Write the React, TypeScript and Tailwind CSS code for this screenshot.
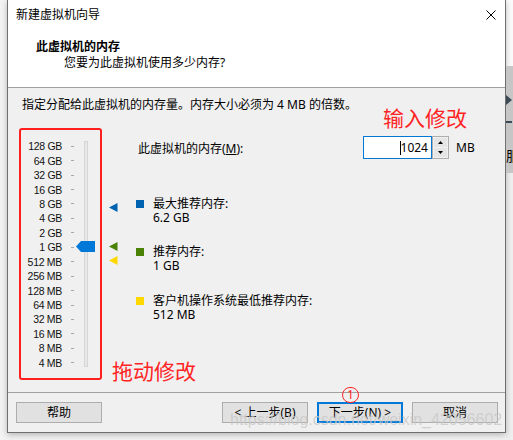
import React from 'react';

const sizes = [
  '128 GB', '64 GB', '32 GB', '16 GB', '8 GB', '4 GB', '2 GB', '1 GB',
  '512 MB', '256 MB', '128 MB', '64 MB', '32 MB', '16 MB', '8 MB', '4 MB',
];

const legend = [
  { color: 'bg-[#0063b1]', title: '最大推荐内存:', value: '6.2 GB', gap: 'mt-[38px]' },
  { color: 'bg-[#498205]', title: '推荐内存:', value: '1 GB', gap: 'mt-[20px]' },
  { color: 'bg-[#ffd800]', title: '客户机操作系统最低推荐内存:', value: '512 MB', gap: 'mt-[21px]' },
];

function Marker({ color, top }: { color: string; top: string }) {
  return (
    <svg className={`absolute left-[7px] ${top}`} width="9" height="9" viewBox="0 0 9 9">
      <polygon points="0,4.5 8.5,0 8.5,9" fill={color} />
    </svg>
  );
}

function Button({ label, primary }: { label: string; primary?: boolean }) {
  return (
    <div
      className={
        'w-[86px] h-[21px] flex items-center justify-center bg-[#e1e1e1] text-[12px] text-black ' +
        (primary ? 'border-2 border-[#0078d7]' : 'border border-[#adadad]')
      }
    >
      {label}
    </div>
  );
}

function MemorySlider() {
  return (
    <div className="ml-[11px] w-[83px] h-[252px] border-2 border-[#ff1f1f] rounded-[3px] flex">
      <div className="pt-[9px]">
        {sizes.map((s) => (
          <div key={s} className="h-[14.45px] flex items-center">
            <span className="w-[41px] text-right whitespace-nowrap text-[10.5px] leading-[14px] tracking-[-0.3px] font-['Liberation_Sans',sans-serif] text-[#111]">
              {s}
            </span>
            <span className="ml-[9px] w-[3px] h-px bg-[#a8a8a8]" />
          </div>
        ))}
      </div>
      <div className="relative ml-[10px] mt-[11px] w-[4px] h-[226px] bg-[#e7e7e7] border border-[#d6d6d6]">
        <svg className="absolute left-[-9px] top-[99px]" width="19" height="11" viewBox="0 0 19 11">
          <polygon points="0,5.5 5,0 19,0 19,11 5,11" fill="#0078d7" />
        </svg>
      </div>
    </div>
  );
}

export default function App() {
  return (
    <div className="w-[513px] h-[440px] bg-[#f3f3f3] flex font-['Segoe_UI','Noto_Sans','Noto_Sans_CJK_SC',sans-serif] text-black overflow-hidden">
      <div className="ml-[7px] w-[499px] h-[433px] flex flex-col relative border-l border-r border-b border-[#6f6f6f] shadow-[0_2px_6px_rgba(0,0,0,0.25)]">
        {/* title bar */}
        <div className="h-[30px] bg-white flex items-center justify-between pl-[8px] pr-[9px]">
          <span className="text-[12px]">新建虚拟机向导</span>
          <svg width="10" height="10" viewBox="0 0 10 10">
            <path d="M0.5 0.5 L9.5 9.5 M9.5 0.5 L0.5 9.5" stroke="#000" strokeWidth="1" />
          </svg>
        </div>

        {/* header */}
        <div className="h-[57px] bg-white pt-[9px]">
          <div className="pl-[28px] text-[12px] leading-[16px] font-bold">此虚拟机的内存</div>
          <div className="pl-[56px] text-[12px] leading-[16px]">您要为此虚拟机使用多少内存?</div>
        </div>
        <div className="h-px bg-[#a0a0a0]" />

        {/* body */}
        <div className="h-[304px] bg-[#f0f0f0] pt-[9px]">
          <div className="pl-[14px] text-[12px] leading-[16px]">
            指定分配给此虚拟机的内存量。内存大小必须为 4 MB 的倍数。
          </div>
          <div className="mt-[15px] flex items-start">
            <MemorySlider />
            <div className="relative w-[34px] h-[252px]">
              <Marker color="#0063b1" top="top-[75px]" />
              <Marker color="#498205" top="top-[114px]" />
              <Marker color="#ffd800" top="top-[128px]" />
            </div>
            <div className="pt-[8px] text-[12px]">
              <div className="flex items-center">
                <span className="w-[227px] pl-[2px] pt-[2px] leading-[14px]">
                  此虚拟机的内存(<span className="underline">M</span>):
                </span>
                <div className="w-[69px] h-[23px] bg-white border border-[#0078d7] flex items-center justify-end pr-[3px]">
                  <span className="w-px h-[14px] bg-black" />
                  <span className="leading-[14px]">1024</span>
                </div>
                <div className="w-[17px] h-[23px] border border-[#adadad] bg-[#f0f0f0] flex flex-col p-px gap-px">
                  <div className="flex-1 bg-[#e5e5e5] flex items-center justify-center">
                    <svg width="5" height="3" viewBox="0 0 5 3"><polygon points="2.5,0 5,3 0,3" fill="#000" /></svg>
                  </div>
                  <div className="flex-1 bg-[#e5e5e5] flex items-center justify-center">
                    <svg width="5" height="3" viewBox="0 0 5 3"><polygon points="0,0 5,0 2.5,3" fill="#000" /></svg>
                  </div>
                </div>
                <span className="ml-[7px] leading-[14px]">MB</span>
              </div>
              {legend.map((l) => (
                <div key={l.title} className={`flex ${l.gap}`}>
                  <span className={`w-[8px] h-[8px] mt-[3px] ${l.color}`} />
                  <div className="ml-[9px] leading-[14px]">
                    <div>{l.title}</div>
                    <div>{l.value}</div>
                  </div>
                </div>
              ))}
            </div>
          </div>
        </div>

        {/* footer */}
        <div className="h-px bg-[#a0a0a0]" />
        <div className="flex-1 bg-[#f0f0f0] flex items-start pt-[9px] pl-[8px] pr-[7px]">
          <Button label="帮助" />
          <div className="flex-1" />
          <div className="flex gap-[9px]">
            <Button label="< 上一步(B)" />
            <Button label="下一步(N) >" primary />
            <Button label="取消" />
          </div>
        </div>

        {/* annotations */}
        <span className="absolute left-[375px] top-[107px] text-[21px] leading-[21px] text-[#ff2424] font-['Noto_Sans_CJK_SC',sans-serif]">
          输入修改
        </span>
        <span className="absolute left-[104px] top-[360px] text-[21px] leading-[21px] text-[#ff2424] font-['Noto_Sans_CJK_SC',sans-serif]">
          拖动修改
        </span>
        <span className="absolute left-[334px] top-[387px] w-[17px] h-[16px] rounded-full border border-[#ff2424] text-[#ff2424] text-[12px] leading-[14px] flex items-center justify-center">
          1
        </span>
        <span className="absolute left-[222px] top-[412px] text-[16px] leading-[16px] font-['Liberation_Sans',sans-serif] text-[#c8c8c8]/80 whitespace-nowrap">
          https://blog.csdn.net/weixin_42056602
        </span>
      </div>

      {/* window behind, partly visible */}
      <div className="w-[7px] h-full flex flex-col overflow-hidden">
        <div className="h-[66px] bg-[#fbfbfb]" />
        <div className="h-[107px] bg-[#c6c6c6] relative">
          <svg className="absolute left-0 top-[29px]" width="7" height="10" viewBox="0 0 7 10">
            <polygon points="0,0 6,5 0,10" fill="#3c4a56" />
          </svg>
          <span className="absolute left-0 top-[55px] w-[6px] h-[2px] bg-[#3c4a56]" />
          <span className="absolute left-0 top-[82px] text-[14px] leading-[14px] font-['Noto_Sans_CJK_SC',sans-serif]">服</span>
        </div>
        <div className="flex-1 bg-[#efefef]" />
      </div>
    </div>
  );
}
